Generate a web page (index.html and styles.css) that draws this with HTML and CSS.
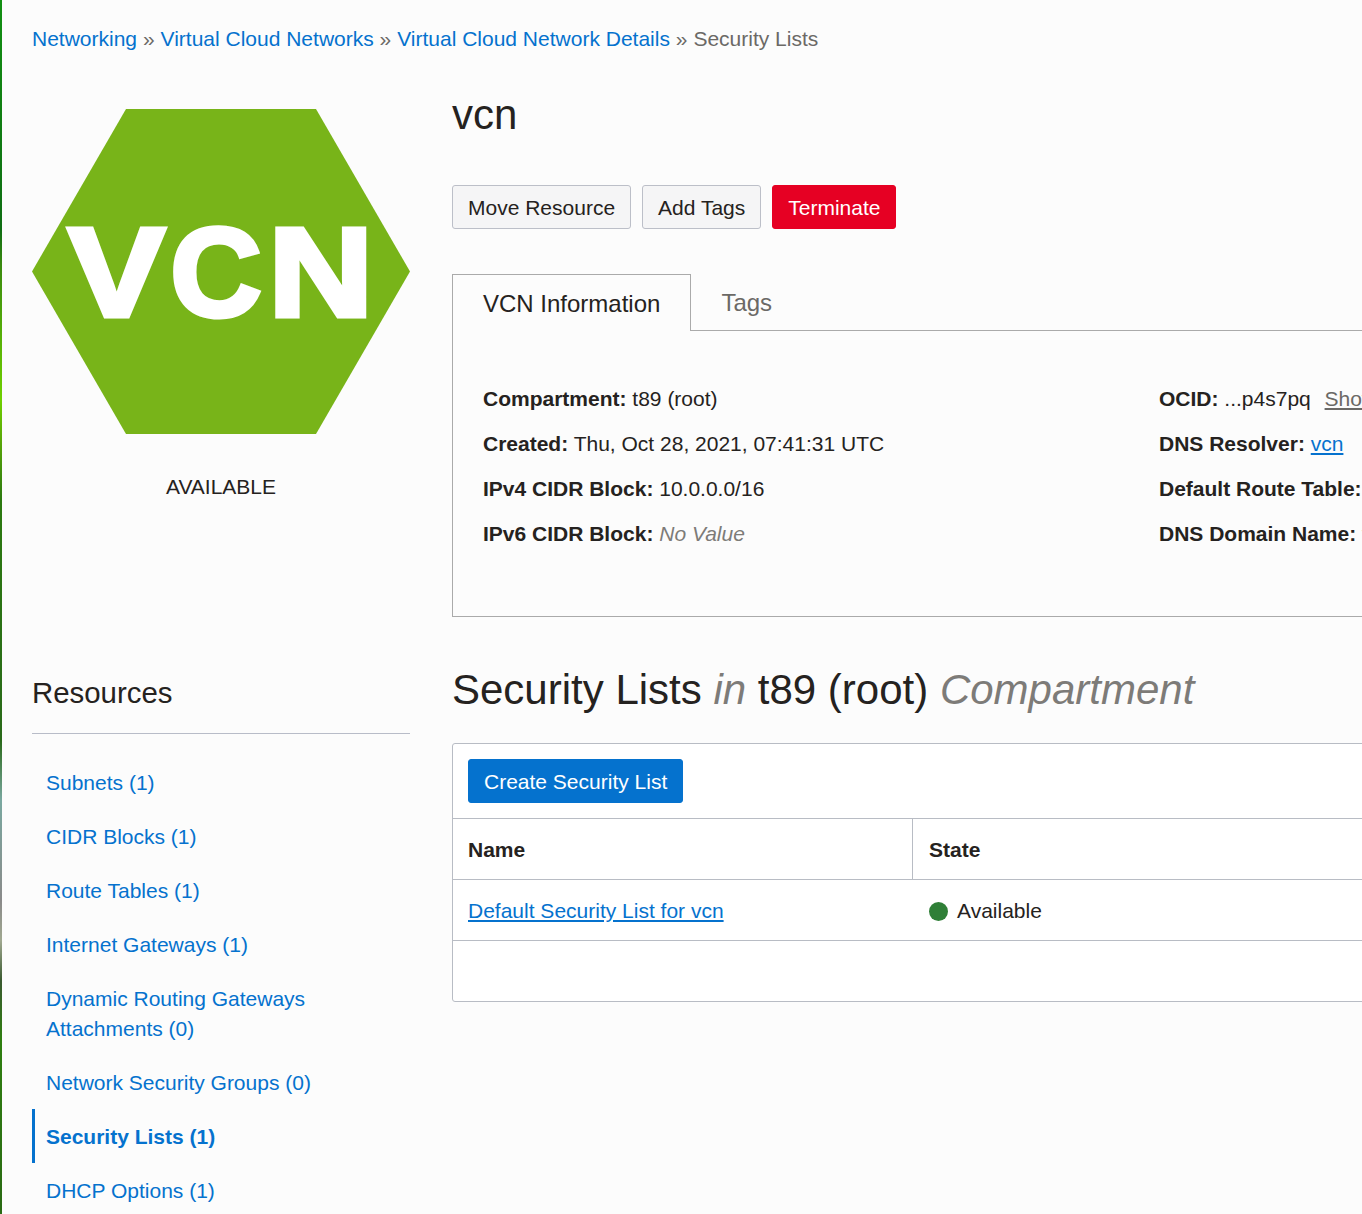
FILE: index.html
```html
<!DOCTYPE html>
<html lang="en">
<head>
<meta charset="utf-8">
<title>Security Lists</title>
<link rel="stylesheet" href="styles.css">
</head>
<body>
<div class="page">
  <nav class="crumbs">
    <a href="#">Networking</a><span class="sep">»</span><a href="#">Virtual Cloud Networks</a><span class="sep">»</span><a href="#">Virtual Cloud Network Details</a><span class="sep">»</span><span class="current">Security Lists</span>
  </nav>
  <div class="layout">
    <aside class="side">
      <div class="badge">
        <svg class="hex" viewBox="0 0 378 325" width="378" height="325">
          <polygon points="94,0 284,0 378,162.500 284,325 94,325 0,162.500" fill="#78b419"/>
          <text class="hex-text" y="206.500"><tspan x="36.200" textLength="96.600" lengthAdjust="spacingAndGlyphs">V</tspan><tspan x="138.500" textLength="91" lengthAdjust="spacingAndGlyphs">C</tspan><tspan x="236.500" textLength="104.600" lengthAdjust="spacingAndGlyphs">N</tspan></text>
        </svg>
        <div class="status">AVAILABLE</div>
      </div>
      <div class="resources">
        <h3 class="res-title">Resources</h3>
        <ul class="res-list">
          <li><a href="#">Subnets (1)</a></li>
          <li><a href="#">CIDR Blocks (1)</a></li>
          <li><a href="#">Route Tables (1)</a></li>
          <li><a href="#">Internet Gateways (1)</a></li>
          <li><a href="#">Dynamic Routing Gateways Attachments (0)</a></li>
          <li><a href="#">Network Security Groups (0)</a></li>
          <li class="active"><a href="#">Security Lists (1)</a></li>
          <li><a href="#">DHCP Options (1)</a></li>
        </ul>
      </div>
    </aside>
    <main class="main">
      <h1 class="title">vcn</h1>
      <div class="actions">
        <button class="btn">Move Resource</button>
        <button class="btn">Add Tags</button>
        <button class="btn danger">Terminate</button>
      </div>
      <div class="tabs">
        <div class="tab active">VCN Information</div>
        <div class="tab">Tags</div>
      </div>
      <section class="info">
        <div class="info-col">
          <p><b>Compartment:</b> t89 (root)</p>
          <p><b>Created:</b> Thu, Oct 28, 2021, 07:41:31 UTC</p>
          <p><b>IPv4 CIDR Block:</b> 10.0.0.0/16</p>
          <p><b>IPv6 CIDR Block:</b> <i class="muted">No Value</i></p>
        </div>
        <div class="info-col">
          <p><b>OCID:</b> ...p4s7pq <a class="show" href="#">Show</a></p>
          <p><b>DNS Resolver:</b> <a href="#">vcn</a></p>
          <p><b>Default Route Table:</b> <a href="#">Default Route Table for vcn</a></p>
          <p><b>DNS Domain Name:</b> vcn.oraclevcn.com</p>
        </div>
      </section>
      <h2 class="section-title">Security Lists <i class="muted">in</i> t89 (root) <i class="muted">Compartment</i></h2>
      <section class="panel">
        <div class="toolbar"><button class="btn primary">Create Security List</button></div>
        <div class="row head">
          <div class="cell name">Name</div>
          <div class="cell">State</div>
        </div>
        <div class="row">
          <div class="cell name"><a href="#">Default Security List for vcn</a></div>
          <div class="cell state"><span class="dot"></span>Available</div>
        </div>
      </section>
    </main>
  </div>
</div>
</body>
</html>
```
FILE: styles.css
```css
* { box-sizing: border-box; }
html, body { margin: 0; height: 100%; overflow: hidden; }
body {
  background: #fcfcfc;
  font-family: "Liberation Sans", Arial, sans-serif;
  font-size: 21px;
  color: #252220;
}
a { color: #0572ce; text-decoration: none; }
.page {
  width: 1600px;
  height: 1214px;
  border-left: 2px solid #107c10;
  border-image: linear-gradient(to bottom,
    #129012 0, #0f6e14 230px, #3a8a10 265px, #6fd000 400px, #5aa808 440px,
    #2c7a10 500px, #2a6a1a 740px, #7aa8a0 800px, #8a8a8a 900px, #a0a890 940px,
    #3a5a30 980px, #2f7f10 1040px, #2a6a14 1214px) 1;
  padding: 24px 0 0 30px;
}
.crumbs { line-height: 30px; color: #6b6966; height: 30px; white-space: nowrap; }
.sep { margin: 0 5.900px; }
.current { color: #6b6966; }
.layout { display: flex; margin-top: 40px; }
.side { width: 378px; flex: none; margin-right: 42px; }
.badge { height: 564px; margin-top: 15px; }
.hex { display: block; }
.hex-text {
  font-family: "Liberation Sans", Arial, sans-serif;
  font-weight: 700;
  font-size: 126px;
  fill: #fff;
  stroke: #fff;
  stroke-width: 5px;
}
.status { margin-top: 38px; text-align: center; line-height: 30px; }
.res-title { margin: 0; font-size: 29.400px; font-weight: 400; line-height: 40px; padding-bottom: 20px; border-bottom: 1px solid #b8bcc8; }
.res-list { list-style: none; margin: 34px 0 0; padding: 0; }
.res-list li { padding: 0 14px; margin-bottom: 24px; line-height: 30px; }
.res-list li.active { font-weight: 700; border-left: 3px solid #0572ce; padding: 13px 11px 11px; margin: -13px 0 13px; }
.main { flex: none; width: 1150px; }
.title { margin: 0; font-size: 42px; font-weight: 400; line-height: 42px; }
.actions { display: flex; gap: 11px; margin-top: 49px; }
.btn {
  font: inherit;
  height: 44px;
  padding: 1px 15px 0;
  border: 1px solid #bcbfc8;
  border-radius: 3px;
  background: #f5f5f6;
  color: #252220;
}
.btn.danger { background: #e60023; border-color: #e60023; color: #fff; }
.btn.primary { background: #0572ce; border-color: #0572ce; color: #fff; }
.tabs { display: flex; margin-top: 45px; height: 57px; border-bottom: 1px solid #aaa; font-size: 24px; }
.tab { padding: 0 30px; line-height: 57px; color: #6b6966; }
.tab.active { color: #252220; border: 1px solid #aaa; border-bottom: 0; height: 57px; background: #fcfcfc; }
.info {
  display: grid;
  grid-template-columns: 676px 1fr;
  height: 286px;
  padding: 53px 0 0 30px;
  border-left: 1px solid #aaa;
  border-bottom: 1px solid #aaa;
}
.info p { margin: 0 0 15px; line-height: 30px; white-space: nowrap; }
.info a { text-decoration: underline; }
.info a.show { color: #6b6966; margin-left: 8px; }
.muted { color: #7d7b78; }
.section-title { margin: 46px 0 0; font-size: 42px; font-weight: 400; line-height: 54px; }
.panel { margin-top: 26px; border: 1px solid #b8bcc4; border-radius: 3px; background: #fff; height: 259px; }
.toolbar { height: 75px; padding: 15px; border-bottom: 1px solid #b8bcc4; }
.row { display: flex; height: 61px; border-bottom: 1px solid #b8bcc4; align-items: stretch; }
.cell { padding: 16px 16px 14px 15px; line-height: 30px; }
.cell.name { width: 460px; }
.cell:not(.name) { padding-left: 16px; }
.head .cell { font-weight: 700; }
.head .cell.name { border-right: 1px solid #b8bcc4; }
.row a { text-decoration: underline; }
.state { display: flex; align-items: center; }
.dot { width: 19px; height: 19px; border-radius: 50%; background: #2f7f37; margin-right: 9px; }
```
